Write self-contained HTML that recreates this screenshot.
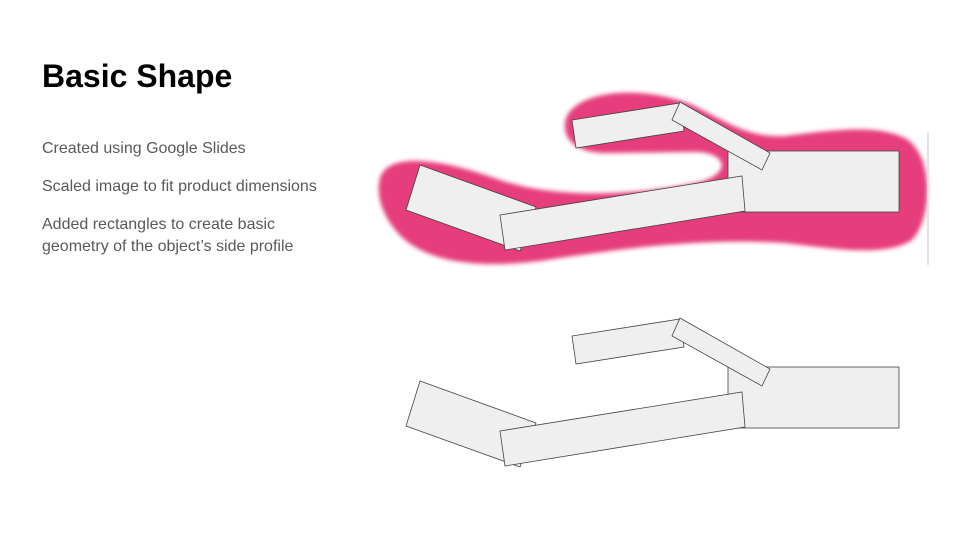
<!DOCTYPE html>
<html><head><style>
body{margin:0;width:960px;height:540px;background:#fff;position:relative;overflow:hidden;font-family:"Liberation Sans",Arial,sans-serif}
h1{position:absolute;left:42px;top:58px;margin:0;font-size:32px;font-weight:bold;color:#000}
p{position:absolute;left:42px;margin:0;font-size:16px;color:#595959;line-height:22px}
svg{position:absolute;left:0;top:0}
</style></head><body>
<h1>Basic Shape</h1>
<p style="top:138px">Created using Google Slides</p>
<p style="top:176px">Scaled image to fit product dimensions</p>
<p style="top:214px">Added rectangles to create basic<br>geometry of the object’s side profile</p>
<svg width="960" height="540">
<defs><filter id="b"><feGaussianBlur stdDeviation="2"/></filter></defs>
<path filter="url(#b)" fill="#e63e7c" d="M380,178 C388,152 440,158 500,180 C560,200 640,195 700,182 C735,172 725,150 690,152 L610,153 C578,154 560,140 566,118 C578,90 640,85 690,104 C725,120 745,138 785,136 C835,130 875,124 905,138 C935,155 932,220 912,240 C885,258 830,248 785,243 C705,238 625,248 560,258 C500,268 440,268 405,240 C385,222 375,198 380,178 Z"/>
<line x1="928" y1="132" x2="928" y2="265" stroke="#e6e0e2" stroke-width="2"/>
<g fill="#efefef" stroke="#444" stroke-width="0.8">
<polygon points="572,120 680,103 684,131 576,148"/>
<rect x="728" y="151" width="171" height="61"/>
<polygon points="680,102 770,153 762,170 672,120"/>
<polygon points="420,165 536,207 520,251 406,210"/>
<polygon points="500,215 742,176 745,211 505,250"/>
</g>
<g fill="#efefef" stroke="#444" stroke-width="0.8">
<polygon points="572,336 680,319 684,347 576,364"/>
<rect x="728" y="367" width="171" height="61"/>
<polygon points="680,318 770,369 762,386 672,336"/>
<polygon points="420,381 536,423 520,467 406,426"/>
<polygon points="500,431 742,392 745,427 505,466"/>
</g>
</svg>
</body></html>
